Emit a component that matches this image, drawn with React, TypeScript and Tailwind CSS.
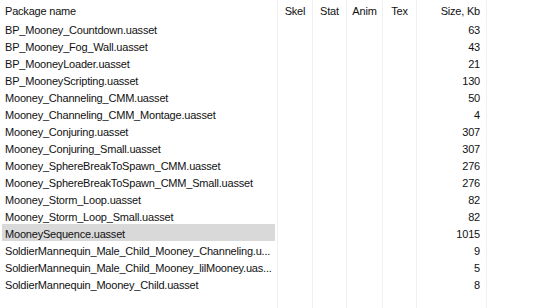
const rows: [string, number][] = [
  ["BP_Mooney_Countdown.uasset", 63],
  ["BP_Mooney_Fog_Wall.uasset", 43],
  ["BP_MooneyLoader.uasset", 21],
  ["BP_MooneyScripting.uasset", 130],
  ["Mooney_Channeling_CMM.uasset", 50],
  ["Mooney_Channeling_CMM_Montage.uasset", 4],
  ["Mooney_Conjuring.uasset", 307],
  ["Mooney_Conjuring_Small.uasset", 307],
  ["Mooney_SphereBreakToSpawn_CMM.uasset", 276],
  ["Mooney_SphereBreakToSpawn_CMM_Small.uasset", 276],
  ["Mooney_Storm_Loop.uasset", 82],
  ["Mooney_Storm_Loop_Small.uasset", 82],
  ["MooneySequence.uasset", 1015],
  ["SoldierMannequin_Male_Child_Mooney_Channeling.u...", 9],
  ["SoldierMannequin_Male_Child_Mooney_lilMooney.uas...", 5],
  ["SoldierMannequin_Mooney_Child.uasset", 8],
];

const cols = [
  { label: "Skel", w: "w-[35px]" },
  { label: "Stat", w: "w-[34px]" },
  { label: "Anim", w: "w-[36px]" },
  { label: "Tex", w: "w-[34px]" },
];

export default function App() {
  return (
    <div className="w-[534px] h-[308px] bg-white overflow-hidden text-[11px] tracking-[-0.2px] text-[#111] font-['Liberation_Sans',Arial,sans-serif]">
      <div className="flex h-full">
        <div className="w-[278px] border-r border-[#f0f0f0]">
          <div className="h-[20px] pl-[5px] pt-[3px]">Package name</div>
          {rows.map(([name], i) => (
            <div
              key={name}
              className={`h-[17px] mx-[2px] pl-[3px] pt-[2px] whitespace-nowrap ${i === 12 ? "bg-[#d9d9d9]" : ""}`}
            >
              {name}
            </div>
          ))}
        </div>
        {cols.map((c) => (
          <div key={c.label} className={`${c.w} border-r border-[#f0f0f0]`}>
            <div className="h-[20px] pt-[3px] text-center">{c.label}</div>
          </div>
        ))}
        <div className="w-[70px] border-r border-[#f0f0f0]">
          <div className="h-[20px] pt-[3px] pr-[6px] text-right">Size, Kb</div>
          {rows.map(([name, size]) => (
            <div key={name} className="h-[17px] pt-[2px] pr-[6px] text-right">
              {size}
            </div>
          ))}
        </div>
      </div>
    </div>
  );
}
